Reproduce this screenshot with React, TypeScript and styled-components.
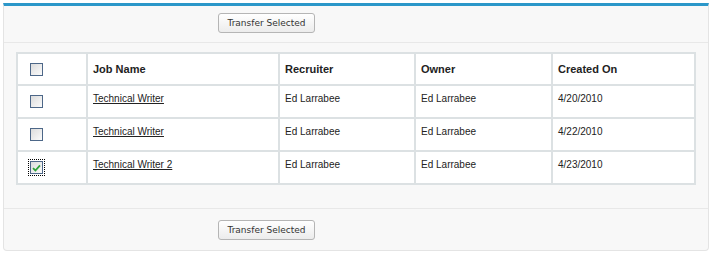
import React from "react";
import styled, { createGlobalStyle } from "styled-components";

const GlobalStyle = createGlobalStyle`
  html, body {
    margin: 0;
    padding: 0;
    background: #ffffff;
  }
  body {
    font-family: "Liberation Sans", Arial, sans-serif;
  }
`;

interface Job {
  name: string;
  recruiter: string;
  owner: string;
  createdOn: string;
  checked?: boolean;
}

const jobs: Job[] = [
  { name: "Technical Writer", recruiter: "Ed Larrabee", owner: "Ed Larrabee", createdOn: "4/20/2010" },
  { name: "Technical Writer", recruiter: "Ed Larrabee", owner: "Ed Larrabee", createdOn: "4/22/2010" },
  { name: "Technical Writer 2", recruiter: "Ed Larrabee", owner: "Ed Larrabee", createdOn: "4/23/2010", checked: true },
];

const columns = [
  { title: "", width: 70 },
  { title: "Job Name", width: 192 },
  { title: "Recruiter", width: 136 },
  { title: "Owner", width: 137 },
  { title: "Created On", width: 143 },
];

const CheckBox = ({ checked }: { checked?: boolean }) => (
  <BoxWrap focused={!!checked}>
    <Box>
      {checked && (
        <svg width="9" height="8" viewBox="0 0 9 8">
          <path d="M1 4.2 L3.4 6.5 L8 1.3" fill="none" stroke="#2fa33a" strokeWidth="1.8" />
        </svg>
      )}
    </Box>
  </BoxWrap>
);

const TransferBar = ({ bottom }: { bottom?: boolean }) => (
  <ButtonBar bottom={bottom}>
    <Button>Transfer Selected</Button>
  </ButtonBar>
);

const App = () => (
  <>
    <GlobalStyle />
    <Panel>
      <TransferBar />
      <TableArea>
        <Table>
          <colgroup>
            {columns.map((c, i) => (
              <col key={i} style={{ width: c.width }} />
            ))}
          </colgroup>
          <thead>
            <tr>
              <HeadCell>
                <CheckBox />
              </HeadCell>
              {columns.slice(1).map((c) => (
                <HeadCell key={c.title}>{c.title}</HeadCell>
              ))}
            </tr>
          </thead>
          <tbody>
            {jobs.map((job, i) => (
              <tr key={i}>
                <CheckCell>
                  <CheckBox checked={job.checked} />
                </CheckCell>
                <Cell>
                  <JobLink href="#">{job.name}</JobLink>
                </Cell>
                <Cell>{job.recruiter}</Cell>
                <Cell>{job.owner}</Cell>
                <Cell>{job.createdOn}</Cell>
              </tr>
            ))}
          </tbody>
        </Table>
      </TableArea>
      <TransferBar bottom />
    </Panel>
  </>
);

export default App;

const Panel = styled.div`
  margin: 3px 0 0 3px;
  width: 706px;
  box-sizing: border-box;
  background: #f8f8f8;
  border-top: 3px solid #2b97c9;
  border-left: 1px solid #e4e4e4;
  border-right: 1px solid #e4e4e4;
  border-bottom: 1px solid #e4e4e4;
  border-radius: 0 0 4px 4px;
`;

const ButtonBar = styled.div<{ bottom?: boolean }>`
  display: flex;
  justify-content: flex-start;
  padding: ${({ bottom }) => (bottom ? "11px 0 10px 214px" : "7px 0 9px 214px")};
  height: 20px;
  border-top: ${({ bottom }) => (bottom ? "1px solid #e8e8e8" : "none")};
  border-bottom: ${({ bottom }) => (bottom ? "none" : "1px solid #e8e8e8")};
`;

const Button = styled.button`
  height: 20px;
  width: 97px;
  padding: 0;
  box-sizing: border-box;
  font-family: "DejaVu Sans", Verdana, sans-serif;
  font-size: 9px;
  color: #333333;
  background: linear-gradient(#ffffff, #ececec);
  border: 1px solid #b5b5b5;
  border-radius: 3px;
  cursor: pointer;
`;

const TableArea = styled.div`
  padding: 9px 0 23px 12px;
`;

const Table = styled.table`
  width: 680px;
  table-layout: fixed;
  border-collapse: separate;
  border-spacing: 0;
  background: #ffffff;
  border-top: 2px solid #dce1e3;
  border-left: 2px solid #dce1e3;
`;

const HeadCell = styled.th`
  height: 32px;
  box-sizing: border-box;
  padding: 0 5px;
  text-align: left;
  vertical-align: middle;
  font-size: 11px;
  font-weight: bold;
  color: #222222;
  border-right: 2px solid #dce1e3;
  border-bottom: 2px solid #dce1e3;
  &:first-child {
    padding-left: 12px;
  }
`;

const Cell = styled.td`
  height: 33px;
  box-sizing: border-box;
  padding: 7px 5px 0;
  vertical-align: top;
  font-size: 10px;
  color: #222222;
  border-right: 2px solid #dce1e3;
  border-bottom: 2px solid #dce1e3;
`;

const CheckCell = styled(Cell)`
  padding: 0 0 0 12px;
  vertical-align: middle;
`;

const JobLink = styled.a`
  color: #222222;
  text-decoration: underline;
`;

const BoxWrap = styled.span<{ focused: boolean }>`
  display: inline-flex;
  padding: 1px;
  margin: -1px;
  outline: ${({ focused }) => (focused ? "1px dotted #000000" : "none")};
  vertical-align: middle;
`;

const Box = styled.span`
  width: 13px;
  height: 13px;
  box-sizing: border-box;
  display: inline-flex;
  align-items: center;
  justify-content: center;
  border: 1px solid #4d6788;
  background: linear-gradient(135deg, #dcdcdc, #fbfbfb);
`;
